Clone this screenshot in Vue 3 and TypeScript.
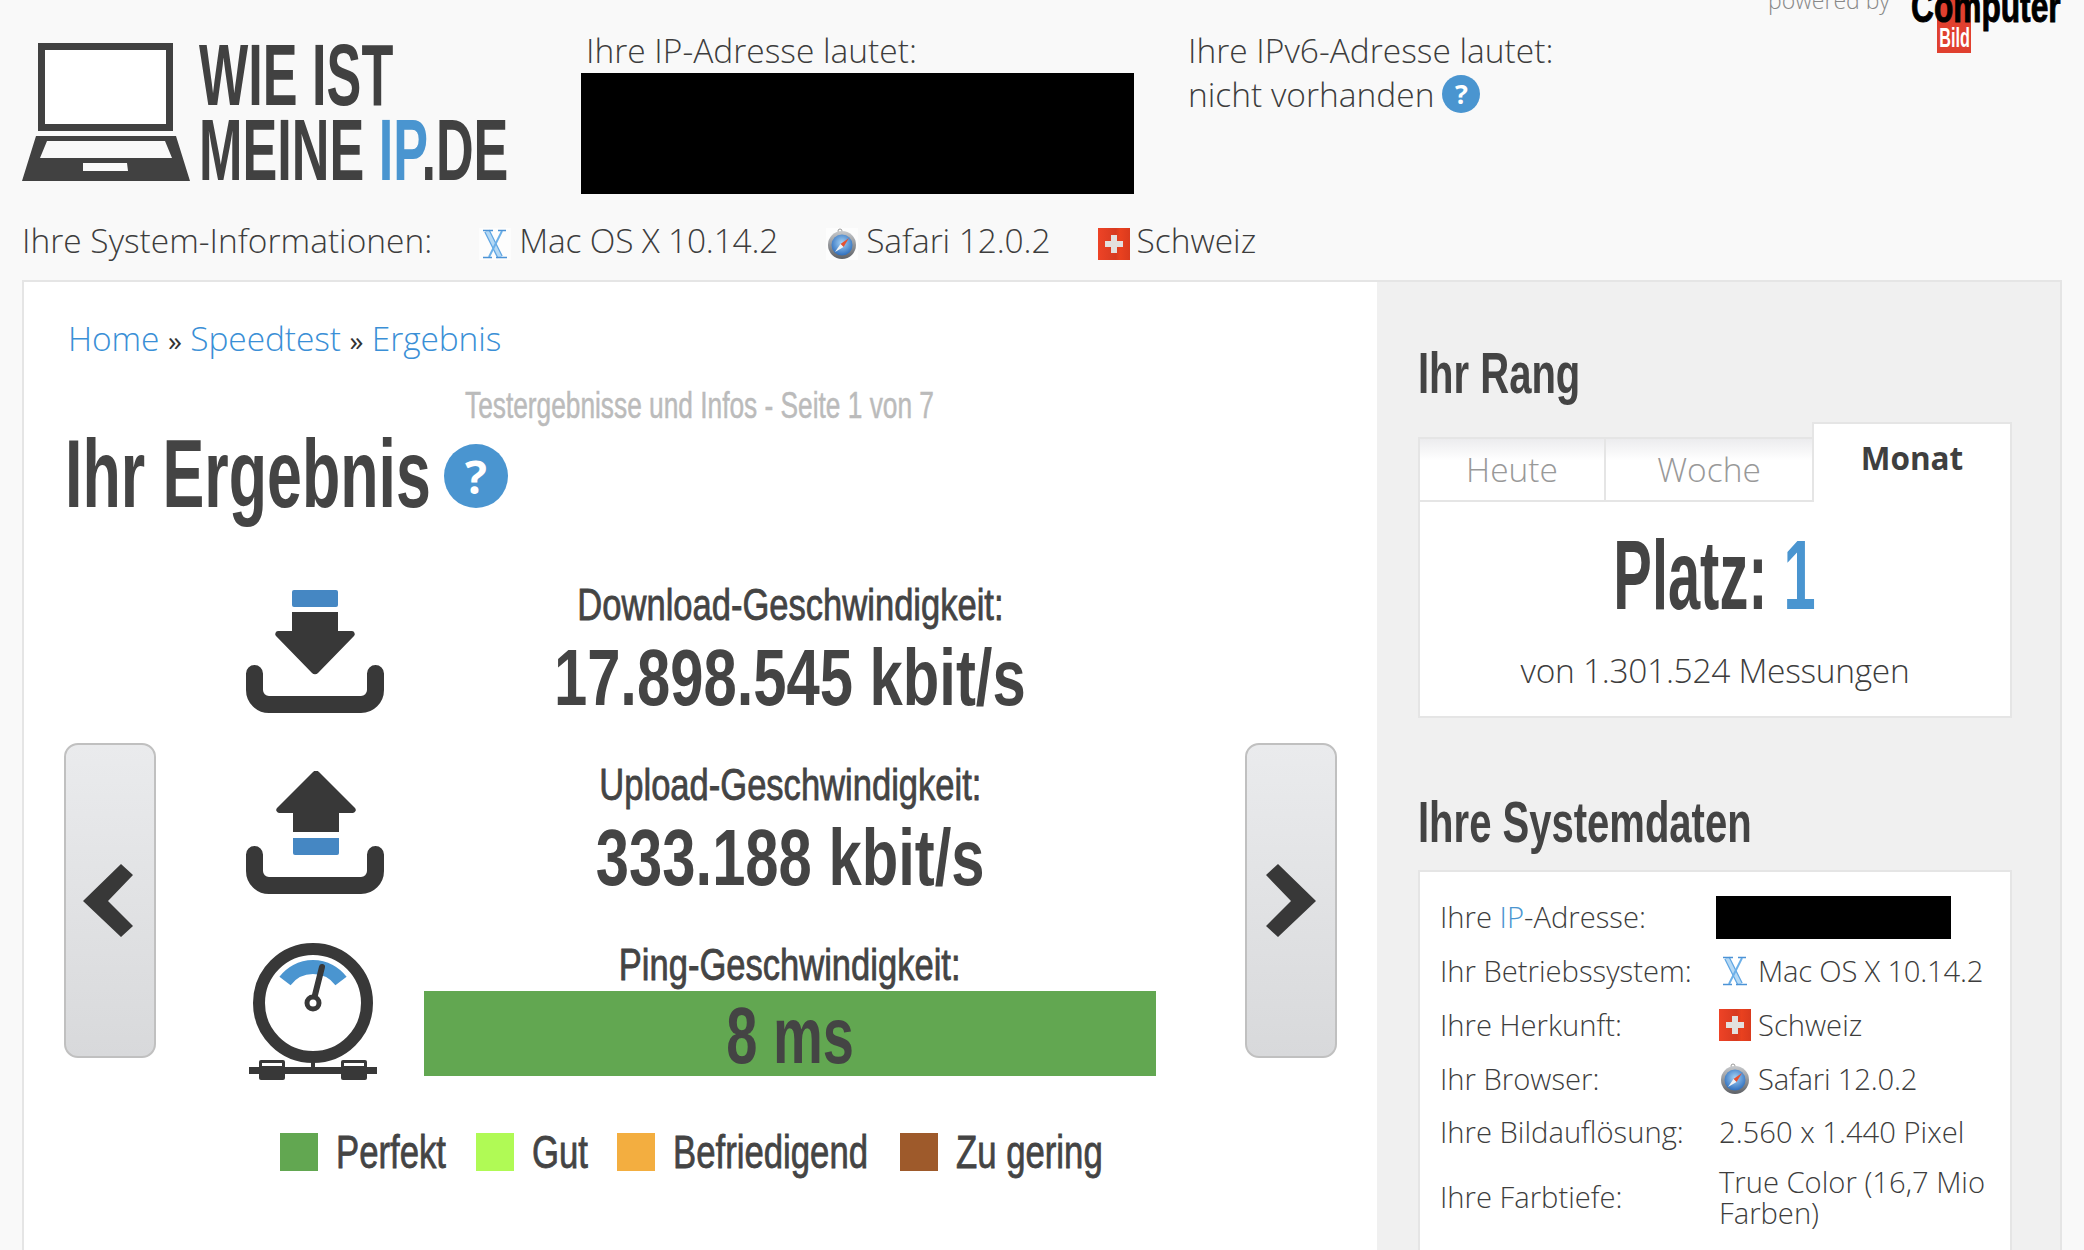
<script setup lang="ts">
interface Metric { label: string; value: string }
const download: Metric = { label: 'Download-Geschwindigkeit:', value: '17.898.545 kbit/s' }
const upload: Metric = { label: 'Upload-Geschwindigkeit:', value: '333.188 kbit/s' }
const legend = [
  { name: 'Perfekt', color: '#62a751', width: 196 },
  { name: 'Gut', color: '#b0fa55', width: 141 },
  { name: 'Befriedigend', color: '#f3ae40', width: 283 },
  { name: 'Zu gering', color: '#9e5a2b', width: 220 },
]
</script>

<template>
  <div class="page">
    <header class="head">
      <div class="logo">
        <svg class="laptop" width="168" height="138" viewBox="0 0 168 138">
          <rect x="19.500" y="3.500" width="128" height="81" fill="#fff" stroke="#414141" stroke-width="7" />
          <path fill="#414141" fill-rule="evenodd" d="M14 93h140l14 45H0zM25 98 18 115H150L143 98zM61 120v8h45l-1-8z" />
        </svg>
        <div class="logo-text">
          <div class="lt l1">WIE IST</div>
          <div class="lt">MEINE <span class="blue">IP</span>.DE</div>
        </div>
      </div>
      <div class="ip4">
        <div class="ip4-l">Ihre IP-Adresse lautet:</div>
        <div class="black big"></div>
      </div>
      <div class="ip6">
        <div>Ihre IPv6-Adresse lautet:</div>
        <div class="nv">nicht vorhanden<span class="q small">?</span></div>
      </div>
      <div class="brand">
        <span class="pb">powered by</span>
        <div class="cb">
          <span class="cb-bild"><span class="cb-bt">Bild</span></span>
          <span class="cb-top">Computer</span>
        </div>
      </div>
    </header>

    <div class="sys">
      <span class="sys-l">Ihre System-Informationen:</span>
      <span class="sys-i a">
        <svg class="ico" width="32" height="32" viewBox="0 0 32 32">
          <rect width="32" height="32" fill="#fff" opacity=".7" />
          <path d="M8 3l13 26" stroke="#5fa5e3" stroke-width="6" fill="none" />
          <path d="M8 3l13 26" stroke="#b5d9f5" stroke-width="3.500" fill="none" />
          <path d="M23 3 10 29" stroke="#6cb0e8" stroke-width="2" fill="none" />
          <path d="M4 2.500h10M19 2.500h8M4 29.500h9M17 29.500h11" stroke="#4c93d6" stroke-width="1.600" fill="none" />
        </svg>Mac OS X 10.14.2</span>
      <span class="sys-i b">
        <svg class="ico" width="32" height="32" viewBox="0 0 32 32">
          <defs>
            <radialGradient id="sf1" cx=".5" cy=".4" r=".6"><stop offset="0" stop-color="#a5d2f5" /><stop offset="1" stop-color="#2f6fbe" /></radialGradient>
            <linearGradient id="sf2" x1="0" y1="0" x2="0" y2="1"><stop offset="0" stop-color="#c7c9cc" /><stop offset="1" stop-color="#5e6166" /></linearGradient>
          </defs>
          <rect width="32" height="32" fill="#fff" opacity=".7" />
          <circle cx="14" cy="3" r="2" fill="none" stroke="#999" />
          <circle cx="16" cy="17" r="14" fill="url(#sf2)" />
          <circle cx="16" cy="17" r="10.500" fill="url(#sf1)" />
          <path d="M23 10l-5.500 9-3-3z" fill="#e8502f" />
          <path d="M9 24l5.500-8 3 3z" fill="#f2f4f6" />
        </svg>Safari 12.0.2</span>
      <span class="sys-i">
        <svg class="ico fl" width="32" height="32" viewBox="0 0 32 32">
          <defs>
            <linearGradient id="fl1" x1="0" y1="0" x2="1" y2="0"><stop offset="0" stop-color="#ee4326" /><stop offset=".55" stop-color="#d73a20" /><stop offset=".7" stop-color="#e9411f" /><stop offset="1" stop-color="#d93a1d" /></linearGradient>
          </defs>
          <rect width="32" height="32" fill="url(#fl1)" />
          <path d="M13 7h6v6h6v6h-6v6h-6v-6H7v-6h6z" fill="#e3e0de" />
        </svg>Schweiz</span>
    </div>

    <main class="main">
      <section class="left">
        <nav class="crumbs"><a>Home</a> <b>»</b> <a>Speedtest</a> <b>»</b> <a>Ergebnis</a></nav>
        <div class="pageinfo"><span class="c pi">Testergebnisse und Infos - Seite 1 von 7</span></div>
        <div class="title"><h1 class="c t1">Ihr Ergebnis</h1><span class="q large">?</span></div>

        <div class="result">
          <button class="nav prev" aria-label="zurück">
            <svg width="50" height="73" viewBox="0 0 50 73"><path d="M0 37 38 0 50 11 25 37 50 62 38 73z" fill="#383838" /></svg>
          </button>
          <div class="metrics">
            <div class="icons">
              <svg width="138" height="123" viewBox="0 0 138 123">
                <rect x="46" width="46" height="17" rx="2" fill="#4587c3" />
                <path d="M46 22h46v19h14a3 3 0 0 1 2 5L72 83a4 4 0 0 1-6 0L30 46a3 3 0 0 1 2-5h14z" fill="#383838" />
                <path d="M8.500 83.500V100A14.500 14.500 0 0 0 23 114.500H115A14.500 14.500 0 0 0 129.500 100V83.500" fill="none" stroke="#383838" stroke-width="17" stroke-linecap="round" />
              </svg>
              <svg width="138" height="123" viewBox="0 0 138 123">
                <path d="M47 61h46V42h14a3 3 0 0 0 2-5L73 1a4 4 0 0 0-6 0L31 37a3 3 0 0 0 2 5h14z" fill="#383838" />
                <path d="M47 67h46v15a2 2 0 0 1-2 2H49a2 2 0 0 1-2-2z" fill="#4587c3" />
                <path d="M8.500 83.500V100A14.500 14.500 0 0 0 23 114.500H115A14.500 14.500 0 0 0 129.500 100V83.500" fill="none" stroke="#383838" stroke-width="17" stroke-linecap="round" />
              </svg>
              <svg width="130" height="137" viewBox="0 0 130 137">
                <circle cx="65" cy="60" r="54" fill="#fff" stroke="#383838" stroke-width="12" />
                <path d="M37 38A35 35 0 0 1 93 38" fill="none" stroke="#4a95d0" stroke-width="14" />
                <path d="M65 60 74 24" stroke="#383838" stroke-width="6" stroke-linecap="round" />
                <circle cx="65" cy="60" r="6" fill="#fff" stroke="#383838" stroke-width="5" />
                <rect x="1" y="124" width="128" height="7" fill="#383838" />
                <rect x="63" y="118" width="4" height="7" fill="#383838" />
                <rect x="11" y="117" width="26" height="20" rx="2" fill="#383838" />
                <rect x="93" y="117" width="26" height="20" rx="2" fill="#383838" />
                <rect x="14" y="120" width="20" height="3" fill="#fff" />
                <rect x="96" y="120" width="20" height="3" fill="#fff" />
              </svg>
            </div>
            <div class="texts">
              <div class="m-label"><span class="c lab">{{ download.label }}</span></div>
              <div class="m-val"><span class="c val">{{ download.value }}</span></div>
              <div class="m-label"><span class="c lab">{{ upload.label }}</span></div>
              <div class="m-val"><span class="c val">{{ upload.value }}</span></div>
              <div class="m-label ping"><span class="c lab">Ping-Geschwindigkeit:</span></div>
              <div class="bar"><span class="c val v3">8 ms</span></div>
            </div>
          </div>
          <button class="nav next" aria-label="weiter">
            <svg width="50" height="73" viewBox="0 0 50 73"><path d="M50 37 12 0 0 11 25 37 0 62 12 73z" fill="#383838" /></svg>
          </button>
        </div>

        <div class="legend">
          <div v-for="l in legend" :key="l.name" class="leg" :style="{ width: l.width + 'px' }">
            <i class="sw" :style="{ background: l.color }"></i><span class="c lg">{{ l.name }}</span>
          </div>
        </div>
      </section>

      <aside class="right">
        <h2 class="c h2">Ihr Rang</h2>
        <div class="tabs">
          <div class="tab t-h">Heute</div>
          <div class="tab t-w">Woche</div>
          <div class="tab on">Monat</div>
        </div>
        <div class="rank">
          <div class="platz"><span class="c pl">Platz: <span class="blue">1</span></span></div>
          <div class="von">von 1.301.524 Messungen</div>
        </div>

        <h2 class="c h2 h2b">Ihre Systemdaten</h2>
        <div class="data">
          <div class="dl">Ihre <span class="blue">IP</span>-Adresse:</div>
          <div class="dv r1"><div class="black small-b"></div></div>
          <div class="dl">Ihr Betriebssystem:</div>
          <div class="dv tight">
            <svg class="ico2" width="32" height="32" viewBox="0 0 32 32">
              <path d="M8 3l13 26" stroke="#5fa5e3" stroke-width="6" fill="none" />
              <path d="M8 3l13 26" stroke="#b5d9f5" stroke-width="3.500" fill="none" />
              <path d="M23 3 10 29" stroke="#6cb0e8" stroke-width="2" fill="none" />
              <path d="M4 2.500h10M19 2.500h8M4 29.500h9M17 29.500h11" stroke="#4c93d6" stroke-width="1.600" fill="none" />
            </svg>Mac OS X 10.14.2</div>
          <div class="dl">Ihre Herkunft:</div>
          <div class="dv">
            <svg class="ico2" width="32" height="32" viewBox="0 0 32 32">
              <rect width="32" height="32" fill="url(#fl1)" />
              <path d="M13 7h6v6h6v6h-6v6h-6v-6H7v-6h6z" fill="#e3e0de" />
            </svg>Schweiz</div>
          <div class="dl">Ihr Browser:</div>
          <div class="dv tight">
            <svg class="ico2" width="32" height="32" viewBox="0 0 32 32">
              <circle cx="14" cy="3" r="2" fill="none" stroke="#999" />
              <circle cx="16" cy="17" r="14" fill="url(#sf2)" />
              <circle cx="16" cy="17" r="10.500" fill="url(#sf1)" />
              <path d="M23 10l-5.500 9-3-3z" fill="#e8502f" />
              <path d="M9 24l5.500-8 3 3z" fill="#f2f4f6" />
            </svg>Safari 12.0.2</div>
          <div class="dl">Ihre Bildauflösung:</div>
          <div class="dv r5">2.560 x 1.440 Pixel</div>
          <div class="dl">Ihre Farbtiefe:</div>
          <div class="dv two">True Color (16,7 Mio Farben)</div>
        </div>
      </aside>
    </main>
  </div>
</template>

<style>
html, body { margin: 0; background: #f9f9f9; overflow: hidden; }
</style>

<style scoped>
.page { width: 2084px; height: 1250px; overflow: hidden; background: #f9f9f9; color: #3d3d3d; font: 300 33.500px/44px "Open Sans", sans-serif; }
.blue { color: #4a95d0; }
.black { background: #000; }
.c { display: inline-block; white-space: nowrap; font-family: "Liberation Sans Narrow", "Liberation Sans", sans-serif; font-weight: 700; color: #444; }

.head { display: flex; height: 202px; position: relative; }
.logo { display: flex; width: 581px; padding: 43px 0 0 22px; box-sizing: border-box; }
.laptop { margin-right: 9px; }
.logo-text { width: 320px; }
.lt { font: 700 87px/75px "Liberation Sans Narrow", "Liberation Sans", sans-serif; color: #414141; transform: scaleX(.6); transform-origin: left; white-space: nowrap; height: 75px; }
.l1 { margin-top: -6px; }
.ip4 { width: 607px; padding-top: 28px; box-sizing: border-box; }
.ip4-l { padding-left: 5px; }
.big { width: 553px; height: 121px; margin-top: 1px; }
.ip6 { padding-top: 28px; }
.nv { display: flex; align-items: center; gap: 8px; line-height: 44px; }
.brand { position: absolute; top: -15px; left: 1768px; display: flex; }
.pb { font-size: 23px; color: #888; line-height: 30px; width: 143px; white-space: nowrap; }
.cb { position: relative; }
.cb-top { display: block; position: relative; font: 700 44px/44px "Liberation Sans Narrow", "Liberation Sans", sans-serif; color: #000; -webkit-text-stroke: 1px #000; transform: scaleX(.72); transform-origin: left; white-space: nowrap; }
.cb-bild { position: absolute; left: 26px; top: 15px; width: 34px; height: 53px; background: #e0402f; display: flex; align-items: flex-end; justify-content: center; }
.cb-bt { display: block; color: #fff; font: 700 27px/30px "Liberation Sans Narrow", sans-serif; transform: scaleX(.6); }

.q { display: inline-flex; align-items: center; justify-content: center; border-radius: 50%; background: #4a95d0; color: #fff; font-family: "Open Sans", sans-serif; font-weight: 700; flex: none; }
.q.small { width: 38px; height: 38px; font-size: 27px; }
.q.large { width: 64px; height: 64px; font-size: 46px; margin: 4px 0 0 14px; }

.sys { display: flex; height: 76px; align-items: center; padding-left: 22px; box-sizing: border-box; margin-bottom: 2px; }
.sys-l { margin-right: 47px; }
.sys-i { display: inline-flex; align-items: center; }
.sys-i.a { margin-right: 48px; letter-spacing: -.2px; }
.sys-i.b { margin-right: 47px; letter-spacing: -.1px; }
.ico { margin: 7px 8px 0 0; }
.sys-i .ico.fl { margin-right: 7px; }

.main { display: flex; margin: 0 22px; width: 2040px; height: 1100px; box-sizing: border-box; border: 2px solid #e5e5e5; background: #fff; }
.left { width: 1353px; box-sizing: border-box; padding: 34px 40px 0 40px; }
.crumbs { color: #333; line-height: 44px; padding-left: 4px; font-weight: 400; letter-spacing: -.1px; }
.crumbs a { color: #3a8fd6; font-weight: 300; }
.crumbs b { font-weight: 400; font-size: 28px; }
.pageinfo { padding-left: 401px; height: 31px; margin-top: 21px; }
.pi { font-size: 36px; line-height: 40px; color: #bbb; font-weight: 400; -webkit-text-stroke: .5px #bbb; transform: scaleX(.73); transform-origin: left; }
.title { display: flex; height: 120px; align-items: center; padding-left: 1px; }
.t1 { margin: 0; font-size: 96px; line-height: 100px; transform: scaleX(.653); transform-origin: left; width: 365px; }

.result { display: flex; align-items: flex-start; margin-top: 46px; }
.nav { width: 92px; height: 315px; margin-top: 163px; padding: 0; flex: none; border: 2px solid #c0c0c0; border-radius: 14px; background: linear-gradient(#eaebed, #d8d9db); display: flex; align-items: center; justify-content: center; }
.prev { padding-right: 4px; }
.metrics { display: flex; flex: 1; margin-left: 89px; }
.next { margin-left: 87px; }
.icons { width: 179px; padding-top: 10px; display: flex; flex-direction: column; align-items: flex-start; gap: 58px; }
.icons svg { margin-left: 1px; }
.icons svg:last-child { margin: -9px 0 0 3px; }
.texts { width: 732px; text-align: center; flex: none; }
.m-label { height: 54px; line-height: 50px; }
.lab { font-size: 44px; line-height: 50px; font-weight: 400; -webkit-text-stroke: .8px #444; transform: scaleX(.785); }
.val { font-size: 80px; line-height: 88px; transform: scaleX(.747); }
.v3 { transform: scaleX(.7); line-height: 90px; }
.m-val { height: 88px; margin-bottom: 38px; }
.bar { height: 85px; background: #62a751; line-height: 85px; }
.ping { height: 51px; }

.legend { display: flex; padding: 49px 0 0 216px; }
.leg { display: flex; align-items: center; flex: none; }
.sw { width: 38px; height: 38px; display: block; margin-right: 18px; flex: none; }
.lg { font-size: 46px; line-height: 46px; font-weight: 400; -webkit-text-stroke: .8px #444; transform: scaleX(.755); transform-origin: left; }

.right { flex: 1; background: #f0f0f0; padding: 0 48px 0 41px; }
.h2 { display: block; margin: 0; font-size: 58px; line-height: 70px; transform: scaleX(.69); transform-origin: left; padding-top: 56px; }
.h2b { padding-top: 0; margin-top: 69px; }
.tabs { display: flex; align-items: flex-end; height: 80px; margin-top: 14px; }
.tab { text-align: center; box-sizing: border-box; height: 65px; line-height: 60px; background: linear-gradient(#ececee, #fff 35%); color: #999; border: 2px solid #e5e5e5; border-right: 0; }
.t-h { width: 186px; }
.t-w { width: 208px; }
.on { flex: 1; height: 80px; background: #fff; color: #3f3f3f; font-weight: 700; border: 2px solid #e5e5e5; border-bottom: 0; line-height: 68px; font-size: 31.500px; }
.rank { background: #fff; border: 2px solid #e5e5e5; border-top: 0; height: 216px; box-sizing: border-box; text-align: center; }
.platz { height: 115px; padding-top: 23px; box-sizing: content-box; }
.pl { font-size: 98px; line-height: 100px; transform: scaleX(.59); }
.von { line-height: 44px; margin-top: 8px; letter-spacing: -.3px; }
.data { display: grid; grid-template-columns: 279px 1fr; margin-top: 13px; padding: 18px 20px 0; background: #fff; border: 2px solid #e5e5e5; font-size: 29.200px; line-height: 31px; height: 500px; align-content: start; }
.dl { align-self: center; }
.dv { display: flex; align-items: center; min-height: 54px; }
.tight { letter-spacing: -.2px; }
.r5 { min-height: 52px; }
.dv.two { display: block; padding-top: 9px; min-height: 69px; }
.small-b { width: 235px; height: 43px; margin-left: -3px; }
.ico2 { margin-right: 7px; flex: none; }
</style>
